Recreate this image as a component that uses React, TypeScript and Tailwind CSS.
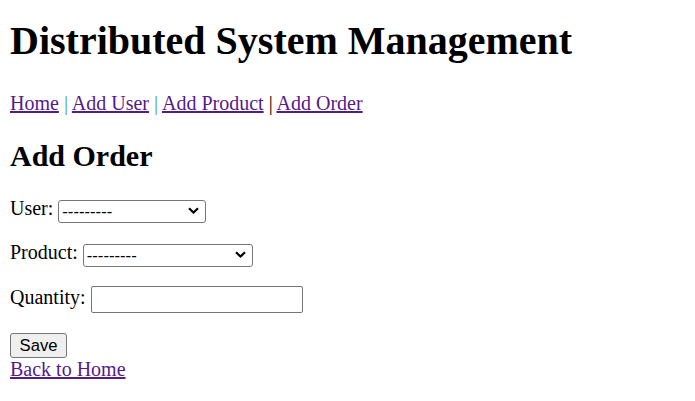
import React from "react";

function Chevron() {
  return (
    <svg
      className="pointer-events-none absolute right-[7px] top-[8px]"
      width="11"
      height="7"
      viewBox="0 0 11 7"
      fill="none"
    >
      <path d="M1 1.2 L5.5 5.5 L10 1.2" stroke="#000" strokeWidth="2.2" strokeLinecap="butt" strokeLinejoin="miter" />
    </svg>
  );
}

function FakeSelect({ width }: { width: string }) {
  return (
    <div className={`relative ${width} mt-[2px] h-[23px]`}>
      <select className="h-[23px] w-full appearance-none rounded-[3px] border border-[#767676] bg-white pl-[3px] pr-[20px] font-['Liberation_Sans',Arial,sans-serif] text-[16.67px] leading-[21px] text-black outline-none">
        <option>---------</option>
      </select>
      <Chevron />
    </div>
  );
}

export default function App() {
  return (
    <div className="min-h-[401px] bg-white px-[10px] pt-[18px] font-['Liberation_Serif','Times_New_Roman',serif] text-[20px] leading-[23px] text-black">
      <h1 className="text-[40px] font-bold leading-[46px]">Distributed System Management</h1>

      <p className="mt-[28px] leading-[23px]">
        <a href="#" className="text-[#551a8b] underline">Home</a>{" "}
        <span className="text-[#4f97d6]">|</span>{" "}
        <a href="#" className="text-[#551a8b] underline">Add User</a>{" "}
        <span className="text-[#4f97d6]">|</span>{" "}
        <a href="#" className="text-[#551a8b] underline">Add Product</a>{" "}
        <span>|</span>{" "}
        <a href="#" className="text-[#551a8b] underline">Add Order</a>
      </p>

      <h2 className="mt-[24px] text-[30px] font-bold leading-[34px]">Add Order</h2>

      <form onSubmit={(e) => e.preventDefault()}>
        <div className="mt-[24px] flex items-start gap-[5px]">
          <label className="leading-[23px]">User:</label>
          <FakeSelect width="w-[148px]" />
        </div>

        <div className="mt-[19px] flex items-start gap-[5px]">
          <label className="leading-[23px]">Product:</label>
          <FakeSelect width="w-[170px]" />
        </div>

        <div className="mt-[20px] flex items-start gap-[5px]">
          <label className="leading-[23px]">Quantity:</label>
          <input
            type="text"
            className="h-[27px] w-[212px] rounded-[2px] border border-[#767676] bg-white px-[3px] font-['Liberation_Sans',Arial,sans-serif] text-[16.67px] outline-none"
          />
        </div>

        <div className="mt-[20px]">
          <button
            type="submit"
            className="flex h-[25px] w-[57px] items-center justify-center rounded-[3px] border border-[#767676] bg-[#efefef] font-['Liberation_Sans',Arial,sans-serif] text-[16.67px] leading-[19px] text-black"
          >
            Save
          </button>
        </div>
      </form>

      <a href="#" className="block w-fit leading-[23px] text-[#551a8b] underline">
        Back to Home
      </a>
    </div>
  );
}
